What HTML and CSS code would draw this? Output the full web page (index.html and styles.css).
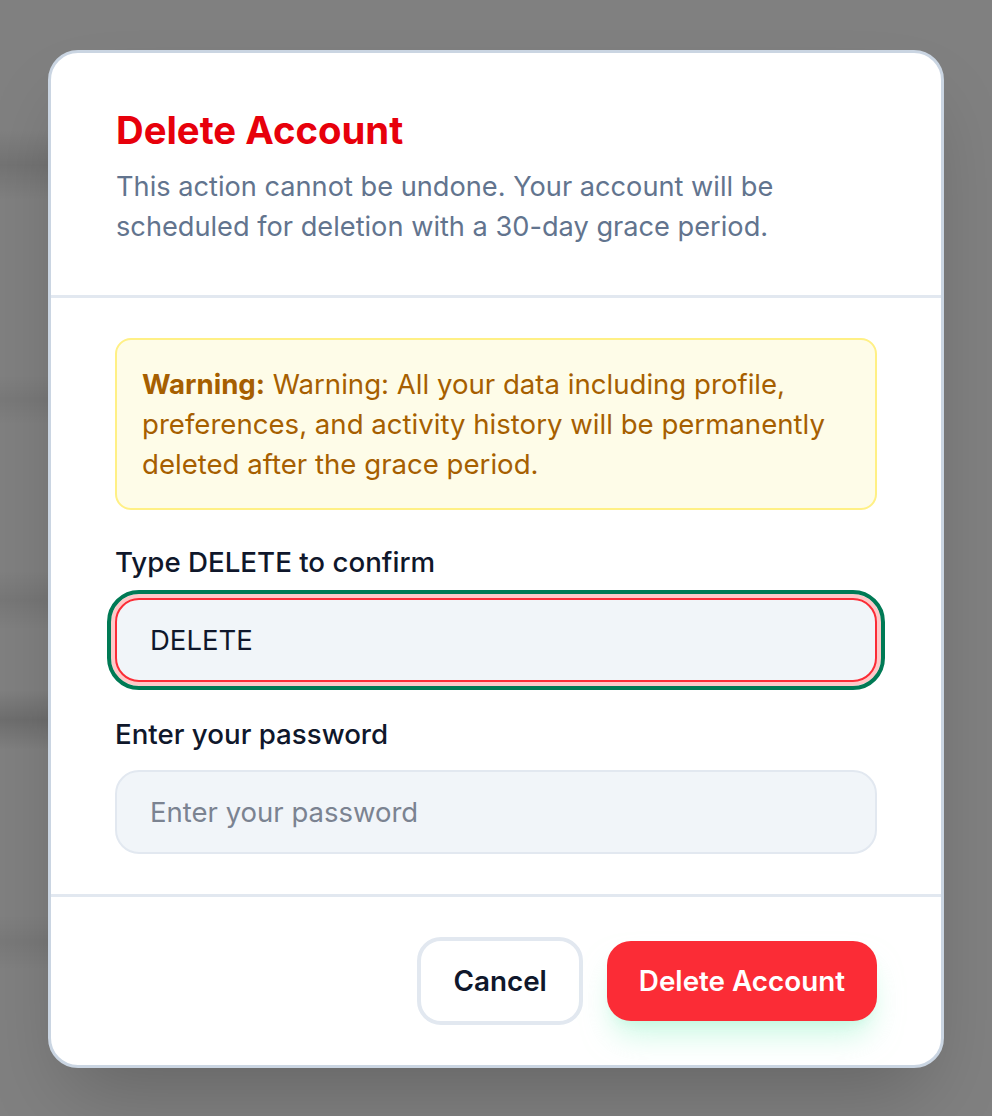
FILE: index.html
```html
<!DOCTYPE html>
<html lang="en">
<head>
<meta charset="utf-8">
<title>Delete Account</title>
<link rel="stylesheet" href="styles.css">
</head>
<body>
<div class="overlay">
  <div class="modal" role="dialog" aria-labelledby="dlg-title">
    <div class="modal-header">
      <h2 id="dlg-title" class="modal-title">Delete Account</h2>
      <p class="modal-desc">This action cannot be undone. Your account will be scheduled for deletion with a 30-day grace period.</p>
    </div>
    <div class="modal-body">
      <p class="alert"><strong class="alert-strong">Warning:</strong> <span class="alert-text">Warning: All your data including profile, preferences, and activity history will be permanently deleted after the grace period.</span></p>
      <div class="field">
        <label class="field-label" for="confirm">Type DELETE to confirm</label>
        <input id="confirm" class="input input-focus" type="text" value="DELETE">
      </div>
      <div class="field">
        <label class="field-label" for="pw">Enter your password</label>
        <input id="pw" class="input" type="password" placeholder="Enter your password">
      </div>
    </div>
    <div class="modal-footer">
      <button class="btn btn-cancel" type="button">Cancel</button>
      <button class="btn btn-danger" type="button">Delete Account</button>
    </div>
  </div>
</div>
</body>
</html>
```
FILE: styles.css
```css
* { box-sizing: border-box; }

html, body {
  margin: 0;
  padding: 0;
  height: 100%;
}

body {
  font-family: Inter, "Noto Sans", sans-serif;
  background-color: #808080;
  background-image:
    linear-gradient(to bottom,
      transparent 130px, rgba(0,0,0,0.10) 165px, transparent 200px,
      transparent 375px, rgba(0,0,0,0.06) 400px, transparent 425px,
      transparent 570px, rgba(0,0,0,0.07) 600px, transparent 630px,
      transparent 690px, rgba(0,0,0,0.14) 720px, transparent 750px,
      transparent 915px, rgba(0,0,0,0.06) 942px, transparent 970px);
  background-size: 640px 100%;
  background-repeat: no-repeat;
  overflow: hidden;
}

.overlay {
  display: flex;
  justify-content: center;
  padding-top: 50px;
}

.modal {
  width: 896px;
  background: #ffffff;
  border: 3px solid #cad5e2;
  border-radius: 30px;
  overflow: hidden;
  box-shadow: 0 40px 80px -20px rgba(0, 0, 0, 0.22);
}

.modal-header {
  padding: 49px 64px 48px 65px;
  border-bottom: 3px solid #e2e8f0;
}

.modal-title {
  margin: 0;
  font-size: 38.3px;
  line-height: 56px;
  font-weight: 700;
  color: #e7000b;
}

.modal-desc {
  margin: 9px 0 0;
  font-size: 27.2px;
  line-height: 40px;
  color: #62748e;
}

.modal-body {
  padding: 40px 64px;
  border-bottom: 3px solid #e2e8f0;
  display: flex;
  flex-direction: column;
  gap: 32px;
}

.alert {
  margin: 0;
  background: #fefce8;
  border: 2px solid #fff085;
  border-radius: 16px;
  padding: 24px 24px 24px 25px;
  font-size: 27.6px;
  line-height: 40px;
  color: #a65f00;
}

.alert-strong { font-weight: 700; }

.field {
  display: flex;
  flex-direction: column;
  gap: 16px;
}

.field-label {
  font-size: 27.7px;
  line-height: 40px;
  font-weight: 500;
  color: #0f172b;
}

.input {
  height: 84px;
  width: 100%;
  padding: 0 32px 0 33px;
  border: 2px solid #e2e8f0;
  border-radius: 24px;
  background: #f1f5f9;
  font-family: Inter, "Noto Sans", sans-serif;
  font-size: 27.5px;
  color: #0f172b;
  outline: none;
}

.input::placeholder { color: #7b8391; }

.input-focus {
  border-color: #fb2c36;
  box-shadow: 0 0 0 4px #ffc9c9;
  outline: 4px solid #007a55;
  outline-offset: 4px;
}

.modal-footer {
  padding: 40px 64px;
  display: flex;
  justify-content: flex-end;
  align-items: center;
  gap: 24px;
}

.btn {
  font-family: Inter, "Noto Sans", sans-serif;
  font-size: 27.8px;
  font-weight: 600;
  line-height: 40px;
  padding: 20px 32px;
  border-radius: 24px;
  cursor: pointer;
}

.btn-cancel {
  background: #ffffff;
  color: #0f172b;
  border: 4px solid #e2e8f0;
}

.btn-danger {
  background: #fb2c36;
  color: #ffffff;
  border: none;
  box-shadow: 0 20px 30px -6px rgba(164, 244, 207, 0.55), 0 8px 12px -8px rgba(164, 244, 207, 0.55);
}
```
